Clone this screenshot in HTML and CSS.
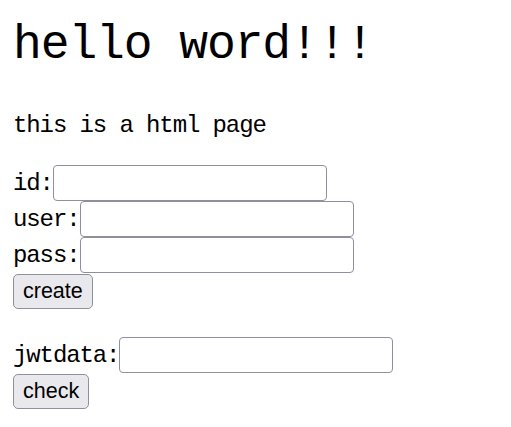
FILE: index.html
```html
<!DOCTYPE html>
<html>
<head>
<meta charset="utf-8">
<title>hello</title>
<link rel="stylesheet" href="styles.css">
</head>
<body>
<h1 class="title">hello word!!!</h1>
<p class="intro">this is a html page</p>
<form class="form">
  <div class="row"><label class="label">id:</label><input class="field" type="text"></div>
  <div class="row"><label class="label">user:</label><input class="field" type="text"></div>
  <div class="row"><label class="label">pass:</label><input class="field" type="text"></div>
  <div class="row btn-row"><button class="btn" type="button">create</button></div>
</form>
<form class="form form-jwt">
  <div class="row"><label class="label">jwtdata:</label><input class="field" type="text"></div>
  <div class="row btn-row"><button class="btn" type="button">check</button></div>
</form>
</body>
</html>
```

FILE: styles.css
```css
html, body {
  background: #ffffff;
}
body {
  margin: 0;
  padding: 0 13px;
  font-family: "Liberation Mono", monospace;
  color: #000000;
}
.title {
  margin: 21px 0 0;
  font-size: 48px;
  line-height: 48px;
  letter-spacing: -1.1px;
  font-weight: normal;
}
.intro {
  margin: 45px 0 0;
  font-size: 24px;
  line-height: 24px;
  letter-spacing: -1.1px;
}
.form {
  margin: 27px 0 0;
}
.form-jwt {
  margin-top: 28px;
}
.row {
  display: flex;
  align-items: baseline;
  height: 36px;
}
.label {
  font-size: 24px;
  line-height: 24px;
  letter-spacing: -1.1px;
}
.field {
  box-sizing: border-box;
  width: 274px;
  height: 36px;
  margin: 0;
  padding: 0 4px;
  border: 1px solid #8f8f9d;
  border-radius: 4px;
  background: #ffffff;
  font-family: "Liberation Sans", sans-serif;
  font-size: 20px;
}
.btn-row {
  align-items: flex-start;
}
.btn {
  box-sizing: border-box;
  height: 35px;
  margin: 1px 0 0;
  padding: 0 9px;
  border: 1px solid #8f8f9d;
  border-radius: 5px;
  background: #e9e9ed;
  color: #000000;
  font-family: "Liberation Sans", sans-serif;
  font-size: 21.5px;
}
```
